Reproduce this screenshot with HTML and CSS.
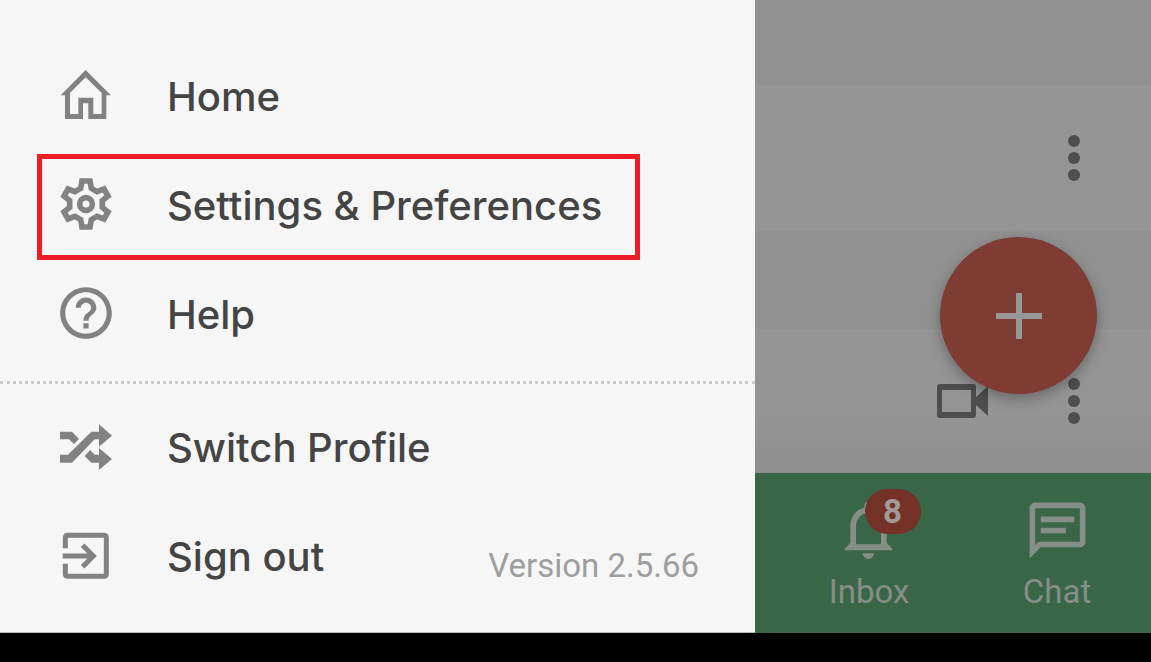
FILE: index.html
```
<!DOCTYPE html>
<html lang="en">
<head>
    <meta charset="UTF-8">
    <meta name="viewport" content="width=device-width, initial-scale=1.0">
    <title>Menu</title>
    <link rel="stylesheet" href="styles.css">
</head>
<body>
    <div class="screen">
        <nav class="drawer" aria-label="Main menu">
            <div class="menu">
                <a class="item" href="#">
                    <svg class="icon" viewBox="75 42 186 186" aria-hidden="true"><path fill-rule="evenodd" d="M167 60L243 136H229V207H175V160H159V207H105V136H92ZM167 82L120 129V192H145V143H190V192H215V129Z"/></svg>
                    <span>Home</span>
                </a>
                <a class="item active" href="#">
                    <svg class="icon" viewBox="-93 -93 186 186" aria-hidden="true"><g fill="none" stroke="currentColor" stroke-width="17"><path d="M-12-69H12L16-47L33-37L54-45L66-24L49-10V10L66 24L54 45L33 37L16 47L12 69H-12L-16 47L-33 37L-54 45L-66 24L-49 10V-10L-66-24L-54-45L-33-37L-16-47Z"/><circle r="19"/></g></svg>
                    <span>Settings &amp; Preferences</span>
                </a>
                <a class="item" href="#">
                    <svg class="icon" viewBox="0 0 24 24" aria-hidden="true"><path d="M11 18h2v-2h-2v2zm1-16C6.48 2 2 6.48 2 12s4.480 10 10 10 10-4.480 10-10S17.520 2 12 2zm0 18c-4.410 0-8-3.590-8-8s3.590-8 8-8 8 3.590 8 8-3.590 8-8 8zm0-14c-2.210 0-4 1.790-4 4h2c0-1.100.9-2 2-2s2 .9 2 2c0 2-3 1.750-3 5h2c0-2.250 3-2.500 3-5 0-2.210-1.790-4-4-4z"/></svg>
                    <span>Help</span>
                </a>
            </div>
            <hr class="divider">
            <div class="menu">
                <a class="item" href="#">
                    <svg class="icon" viewBox="75 46 186 186" aria-hidden="true"><path d="M90 96H126L147 118L132 133L117 119H90ZM90 165H114L184 96H207V74L246 108L207 141V119H194L126 189H90ZM180 151L194 165H207V145L246 178L207 211V189H184L164 169Z"/></svg>
                    <span>Switch Profile</span>
                </a>
                <div class="row">
                    <a class="item" href="#">
                        <svg class="icon" viewBox="75 373 186 186" aria-hidden="true"><g fill="none" stroke="currentColor" stroke-width="15"><path d="M106 446V415Q106 407 114 407H221Q229 407 229 415V523Q229 530 221 530H114Q106 530 106 523V492M98 469H188M158 437L190 469L158 501"/></g></svg>
                        <span>Sign out</span>
                    </a>
                    <span class="version">Version 2.5.66</span>
                </div>
            </div>
        </nav>
        <main class="page">
            <div class="list">
                <div class="band"></div>
                <div class="entry">
                    <button class="plain" type="button" aria-label="More options"><svg class="dots" viewBox="0 0 12 46"><circle cx="6" cy="6" r="6"/><circle cx="6" cy="23" r="6"/><circle cx="6" cy="40" r="6"/></svg></button>
                </div>
                <div class="band wide"></div>
                <div class="entry last">
                    <button class="plain" type="button" aria-label="Video call"><svg class="video" viewBox="0 0 52 34"><path fill-rule="evenodd" d="M3 0H36Q39 0 39 3V13L51 2V32L39 21V31Q39 34 36 34H3Q0 34 0 31V3Q0 0 3 0ZM5 6V28H34V6Z"/></svg></button>
                    <button class="plain" type="button" aria-label="More options"><svg class="dots" viewBox="0 0 12 46"><circle cx="6" cy="6" r="6"/><circle cx="6" cy="23" r="6"/><circle cx="6" cy="40" r="6"/></svg></button>
                </div>
                <button class="fab" type="button" aria-label="Add">
                    <svg viewBox="0 0 46 46"><path d="M20 0H26V20H46V26H26V46H20V26H0V20H20Z"/></svg>
                </button>
            </div>
            <nav class="tabs" aria-label="Tabs">
                <a class="tab" href="#">
                    <span class="tab-icon">
                        <svg viewBox="104 80 201 201" aria-hidden="true"><path fill-rule="evenodd" d="M130 240V235L147 217V168C147 138 165 118 189 112V106A12 12 0 0 1 213 106V112C238 118 256 138 256 168V217L273 235V240ZM164 222H239V168C239 146 223 128 201 128S164 146 164 168ZM184 249H218A17 17 0 0 1 184 249Z"/></svg>
                        <span class="badge">8</span>
                    </span>
                    <span>Inbox</span>
                </a>
                <a class="tab" href="#">
                    <span class="tab-icon">
                        <svg viewBox="0 0 24 24" aria-hidden="true"><path fill-rule="evenodd" d="M4 2C2.9 2 2 2.9 2 4V22L6 18H20C21.1 18 22 17.1 22 16V4C22 2.9 21.1 2 20 2H4ZM4 4H20V16H5.2L4 17.2V4ZM6 7V9H18V7H6ZM6 11V13H15V11H6Z"/></svg>
                    </span>
                    <span>Chat</span>
                </a>
            </nav>
        </main>
    </div>
    <footer class="system-bar"></footer>
</body>
</html>
```

FILE: styles.css
```
* {
    box-sizing: border-box;
}
body {
    display: flex;
    flex-direction: column;
    min-height: 100vh;
    margin: 0;
    background: #000;
    font-family: Roboto, sans-serif;
    font-size: 33px;
}
a {
    color: inherit;
    text-decoration: none;
}
svg {
    display: block;
    fill: currentColor;
}
button {
    padding: 0;
    border: none;
    cursor: pointer;
}
.screen {
    display: grid;
    grid-template-columns: 65.6% 1fr;
    flex: 1;
}

/* drawer */
.drawer {
    padding-top: 45px;
    background: #f6f6f6;
    border-bottom: 1px solid #bbb;
    color: #444;
}
.menu {
    display: flex;
    flex-direction: column;
    align-items: flex-start;
    gap: 3px;
    padding-left: 37px;
}
.item {
    display: flex;
    align-items: center;
    gap: 50px;
    height: 106px;
    padding: 0 33px 0 13px;
    border: 5px solid transparent;
    font-family: Inter, sans-serif;
    font-size: 40px;
    font-weight: 500;
    line-height: 48px;
    white-space: nowrap;
}
.item span {
    padding-bottom: 2px;
}
.item.active {
    border-color: #ee1c25;
}
.icon {
    flex: none;
    width: 62px;
    height: 62px;
    margin-bottom: 6px;
    color: #828282;
}
.divider {
    height: 3px;
    margin: 12px 0;
    border: none;
    border-top: 3px dotted #ccc;
}
.row {
    display: flex;
    align-items: center;
    justify-content: space-between;
    width: 100%;
    padding-right: 56px;
}
.version {
    padding-top: 15px;
    color: #9e9e9e;
    white-space: nowrap;
}

/* dimmed page behind the drawer */
.page {
    display: flex;
    flex-direction: column;
    background: #959595;
}
.list {
    position: relative;
    display: flex;
    flex-direction: column;
    flex: 1;
}
.band {
    height: 85px;
    background: #919191;
}
.band.wide {
    height: 98px;
}
.entry {
    display: flex;
    align-items: center;
    justify-content: flex-end;
    gap: 79px;
    height: 146px;
    padding-right: 71px;
}
.entry.last {
    flex: 1;
    background: linear-gradient(#959595 60%, #8e8e8e);
}
.plain {
    background: none;
    color: #4e4e4e;
}
.dots {
    width: 12px;
    height: 46px;
}
.video {
    width: 52px;
    height: 34px;
}
.fab {
    position: absolute;
    right: 54px;
    bottom: 79px;
    display: flex;
    align-items: center;
    justify-content: center;
    width: 157px;
    height: 157px;
    border-radius: 50%;
    background: #7e3c32;
    box-shadow: 0 5px 14px rgba(0, 0, 0, 0.3);
    color: #979797;
}
.fab svg {
    width: 46px;
    height: 46px;
}
.tabs {
    display: grid;
    grid-template-columns: 1fr 1fr;
    height: 160px;
    padding: 24px 0 0 20px;
    background: #3a6648;
    color: #858e87;
}
.tab {
    display: flex;
    flex-direction: column;
    align-items: center;
    gap: 9px;
    line-height: 38px;
}
.tab-icon {
    position: relative;
}
.tab-icon svg {
    width: 67px;
    height: 67px;
}
.badge {
    position: absolute;
    top: -8px;
    left: 29px;
    width: 56px;
    height: 45px;
    border-radius: 23px;
    background: #733127;
    color: #a09a99;
    font-weight: bold;
    line-height: 45px;
    text-align: center;
}
.system-bar {
    height: 29px;
}
```
